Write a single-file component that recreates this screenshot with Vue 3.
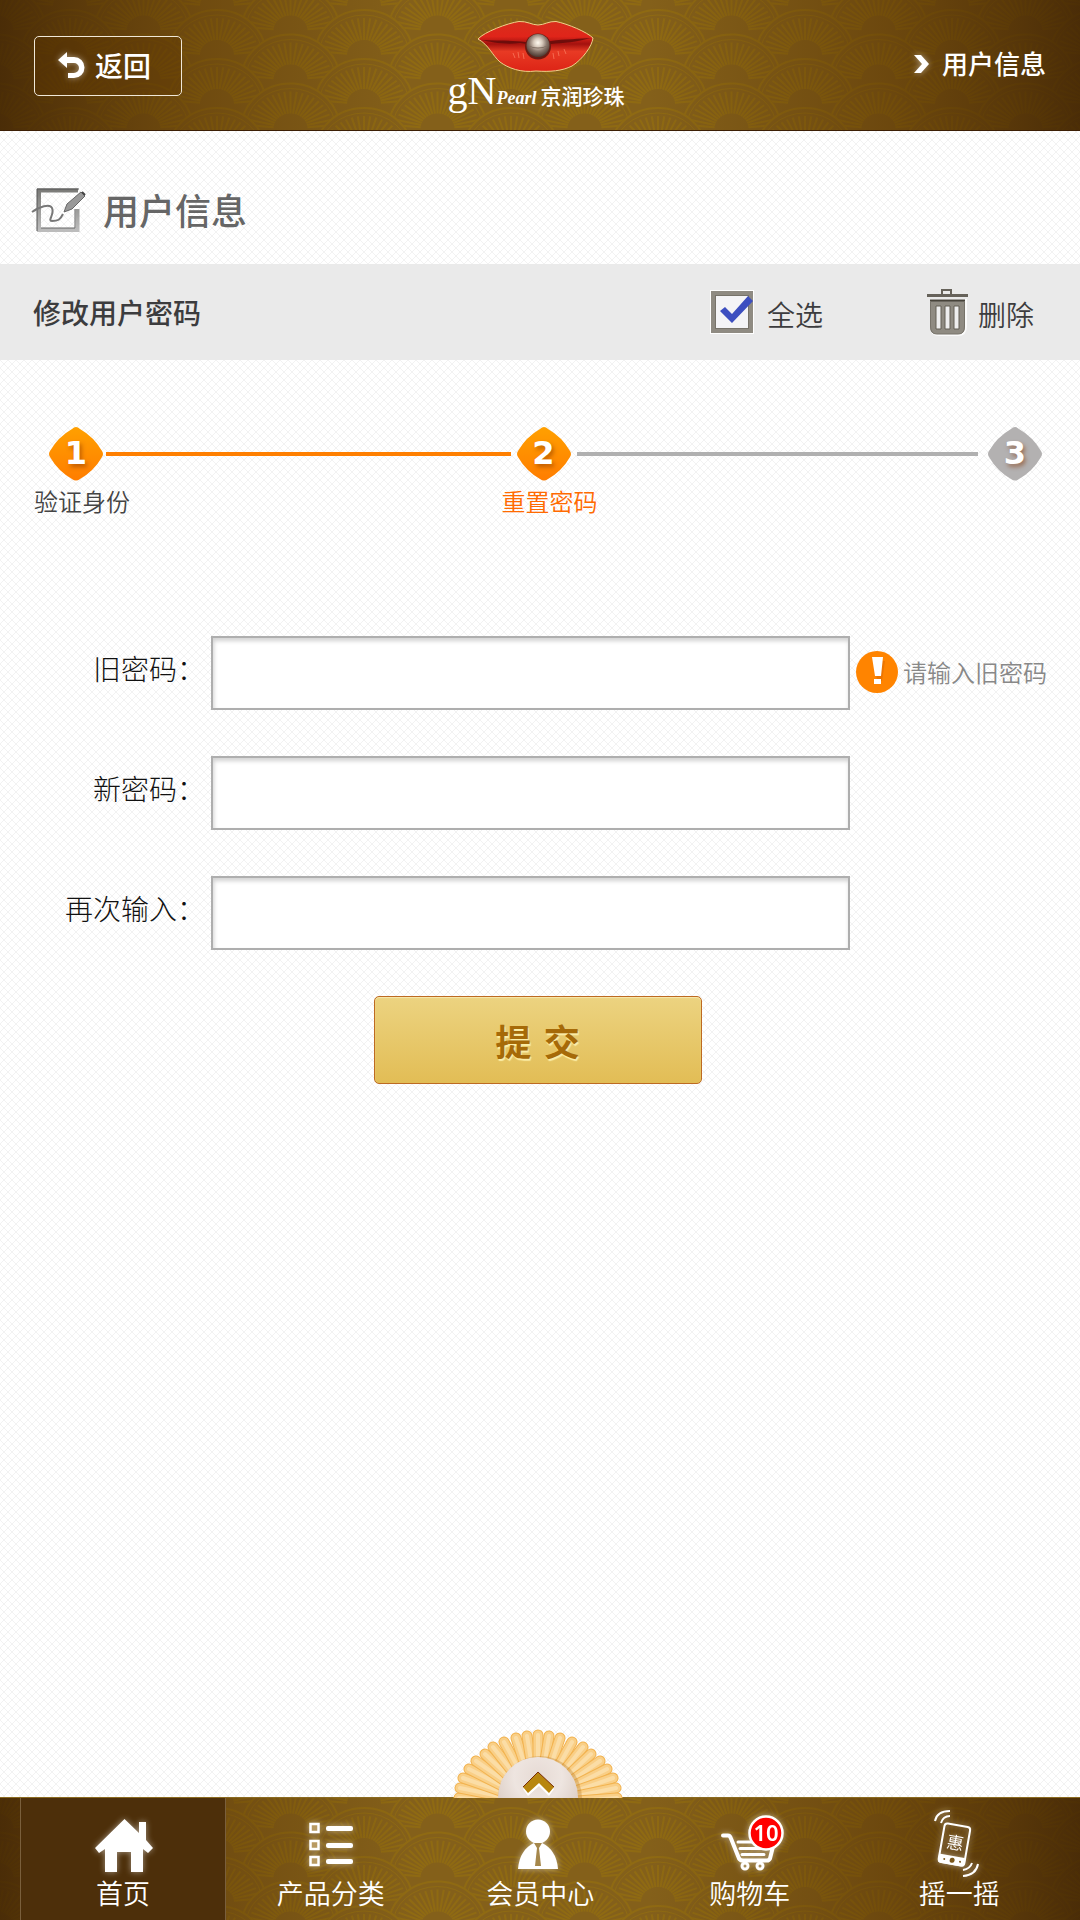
<script setup>
import { ref } from 'vue'

const allSelected = ref(true)
const fields = ref([
  { id: 'old', label: '旧密码', value: '', hint: '请输入旧密码' },
  { id: 'new', label: '新密码', value: '', hint: '' },
  { id: 'repeat', label: '再次输入', value: '', hint: '' },
])

// Fans of the wave pattern, back to front: [centre x, centre y]
const fans = []
for (let row = -1; row < 5; row++) {
  const y = row * 24.5 + 6
  const shift = row % 2 === 0 ? 70 : -3.5
  for (const x of [shift - 147, shift, shift + 147, shift + 294]) fans.push([x, y])
}
const rays = Array.from({ length: 21 }, (_, i) => {
  const a = ((i - 10) * 8.5 * Math.PI) / 180
  const s = Math.sin(a)
  const c = Math.cos(a)
  return `M${s * 17} ${-c * 15}L${s * 42} ${-c * 37}`
}).join('')

// Rib tips of the shell, right half, measured from the hinge
const half = [[11, -67], [22, -65], [34, -61], [45, -56], [53, -49], [62, -42], [69, -34], [75, -25], [78, -15], [79, -5]]
const ribs = [
  ...half.map(([x, y]) => [-x, y]).reverse(),
  [0, -68],
  ...half,
]
</script>

<template>
  <div class="page">
    <header class="top">
      <svg class="waves" aria-hidden="true">
        <defs>
          <g id="fan">
            <ellipse rx="50" ry="46" fill="#84601a" />
            <ellipse rx="49" ry="45" fill="none" stroke="#8f6a12" stroke-width="2" />
            <ellipse rx="45" ry="40" fill="none" stroke="#8f6a12" stroke-width="1" />
            <path :d="rays" stroke="#8f6a12" stroke-width="2" />
          </g>
          <pattern id="scales" width="147" height="49" patternUnits="userSpaceOnUse">
            <use v-for="(f, i) in fans" :key="i" href="#fan" :x="f[0]" :y="f[1]" />
          </pattern>
          <linearGradient id="shade">
            <stop offset="0" stop-color="#3a1e02" stop-opacity=".78" />
            <stop offset=".18" stop-color="#512c00" stop-opacity=".42" />
            <stop offset=".38" stop-color="#512c00" stop-opacity="0" />
            <stop offset=".6" stop-color="#512c00" stop-opacity="0" />
            <stop offset=".82" stop-color="#512c00" stop-opacity=".46" />
            <stop offset="1" stop-color="#3a1e02" stop-opacity=".78" />
          </linearGradient>
        </defs>
        <rect width="100%" height="100%" fill="url(#scales)" />
        <rect width="100%" height="100%" fill="url(#shade)" />
      </svg>

      <button class="back" type="button">
        <svg width="30" height="30" viewBox="57 50 30 30" aria-hidden="true">
          <path d="M58 59l9-8v5h7a9 9 0 0 1 0 21h-6v-5h6a5 5 0 0 0 0-10h-7v5z" fill="#fff" />
        </svg>
        <span>返回</span>
      </button>

      <div class="logo">
        <svg width="118" height="54" viewBox="477 20 118 54" aria-hidden="true">
          <defs>
            <linearGradient id="lip" x2="0" y2="1">
              <stop offset="0" stop-color="#d92d1c" />
              <stop offset=".3" stop-color="#e0251a" />
              <stop offset=".45" stop-color="#a3120e" />
              <stop offset=".6" stop-color="#e83a24" />
              <stop offset="1" stop-color="#dd2416" />
            </linearGradient>
            <radialGradient id="bead" cx=".5" cy=".38" r=".62">
              <stop offset="0" stop-color="#fffaf0" />
              <stop offset=".3" stop-color="#d8cabd" />
              <stop offset=".6" stop-color="#8d7b70" />
              <stop offset="1" stop-color="#4a352d" />
            </radialGradient>
          </defs>
          <path d="M478 39C484 32 508 23 519 21.500C527 21 532 25 538 25C544 25 549 21 556 21.500C568 24 587 32 593 38C592 46 583 59 572 66C562 71 550 72 536 71C521 73 508 68 500 62C492 55 489 45 478 39Z" fill="url(#lip)" stroke="#efd08a" stroke-width="1" />
          <path d="M481 40C500 41 514 40 525 42C535 43 544 43 551 41C565 39 580 39 591 38C577 42 563 43 551 44C540 46 531 45 520 43C505 45 491 42 481 40Z" fill="#5c0b0a" opacity=".8" />
          <path d="M513 53l2 5m3-6l1 6m4-5l1 6m29-6l1 6m4-8l1 5m5-7l2 5" stroke="#ff8d70" stroke-width="1" opacity=".6" />
          <circle cx="538" cy="46.500" r="13" fill="#6b1a12" />
          <circle cx="538" cy="45.500" r="11.500" fill="url(#bead)" />
          <path d="M529 46q9 3 18 0q-9 5-18 0z" fill="#5a463c" opacity=".7" />
        </svg>
        <div class="brand"><span class="gn">gN</span><em>Pearl</em><b>京润珍珠</b></div>
      </div>

      <a class="crumb" href="#">
        <svg width="18" height="22" viewBox="912 53 18 22" aria-hidden="true">
          <path d="M914 55h7l8 9-8 9h-7l8-9z" fill="#fff" />
        </svg>
        <span>用户信息</span>
      </a>
    </header>

    <main>
      <h1>
        <svg width="56" height="48" viewBox="31 187 56 48" aria-hidden="true">
          <defs>
            <linearGradient id="steel" x2="0" y2="1">
              <stop offset="0" stop-color="#7b7b78" />
              <stop offset="1" stop-color="#bcbcbc" />
            </linearGradient>
          </defs>
          <path d="M78 190.500H39V230H77.500V209" fill="none" stroke="url(#steel)" stroke-width="4" />
          <path d="M79 189H37V231" fill="none" stroke="#555" stroke-width="1" />
          <path d="M41 228H75V209" fill="none" stroke="#666" stroke-width="1" />
          <path d="M32 212c7-5 18-9 20-4c3 6-5 13 0 13c6 0 8-1 11-7" fill="none" stroke="#777" stroke-width="2" />
          <path d="M64 212l3-8 14-12 4 4-13 13z" fill="#999" stroke="#666" stroke-width="1" />
          <path d="M82 192l3 3" stroke="#444" stroke-width="2" />
        </svg>
        <span>用户信息</span>
      </h1>

      <section class="bar">
        <h2>修改用户密码</h2>
        <label class="all" for="all">
          <span class="tick">
            <input id="all" v-model="allSelected" type="checkbox" />
            <svg v-if="allSelected" width="42" height="42" viewBox="710 293 42 42" aria-hidden="true">
              <path d="M719 313l5-4 7 7 16-18 5 5-21 22z" fill="#3d4fc0" />
            </svg>
          </span>
          <span class="name">全选</span>
        </label>
        <button class="del" type="button">
          <svg width="42" height="48" viewBox="926 290 42 48" aria-hidden="true">
            <path d="M931 303h33v25q0 8-7 8h-19q-7 0-7-8z" fill="none" stroke="#fff" stroke-width="4" opacity=".8" />
            <path d="M941 296v-4h9v4" fill="none" stroke="#66625a" stroke-width="2" />
            <path d="M926 296h41v3h-41z" fill="#66625a" />
            <path d="M929 302h35v26q0 8-6 8h-23q-6 0-6-8z" fill="#8f8b82" />
            <path d="M929 302.500h35" stroke="#47433a" stroke-width="2" />
            <path d="M929.500 303v25q0 8 6 8h22q6 0 6-8v-25" fill="none" stroke="#77736a" stroke-width="1" />
            <path d="M935 308h5v23h-5zM944 308h5v23h-5zM953 308h5v23h-5z" fill="#eee" stroke="#625e55" stroke-width="1" />
          </svg>
          <span class="name">删除</span>
        </button>
      </section>

      <ol class="steps">
        <li>
          <div class="mark">
            <svg width="54" height="54" viewBox="0 0 54 54" aria-hidden="true">
              <defs>
                <linearGradient id="amber" x2="0" y2="1">
                  <stop offset="0" stop-color="#ffa000" />
                  <stop offset="1" stop-color="#ff7d00" />
                </linearGradient>
              </defs>
              <path d="M27 0Q29 0 31 2Q45 10 53 24Q55 27 53 30Q45 44 31 52Q27 55 23 52Q9 44 1 30Q-1 27 1 24Q9 10 23 2Q25 0 27 0Z" fill="url(#amber)" />
            </svg>
            <span>1</span>
          </div>
          <i class="line"></i>
          <p>验证身份</p>
        </li>
        <li class="now">
          <div class="mark">
            <svg width="54" height="54" viewBox="0 0 54 54" aria-hidden="true">
              <path d="M27 0Q29 0 31 2Q45 10 53 24Q55 27 53 30Q45 44 31 52Q27 55 23 52Q9 44 1 30Q-1 27 1 24Q9 10 23 2Q25 0 27 0Z" fill="url(#amber)" />
            </svg>
            <span>2</span>
          </div>
          <i class="line grey"></i>
          <p>重置密码</p>
        </li>
        <li class="last">
          <div class="mark">
            <svg width="54" height="54" viewBox="0 0 54 54" aria-hidden="true">
              <path d="M27 0Q29 0 31 2Q45 10 53 24Q55 27 53 30Q45 44 31 52Q27 55 23 52Q9 44 1 30Q-1 27 1 24Q9 10 23 2Q25 0 27 0Z" fill="#b3b1b1" />
            </svg>
            <span>3</span>
          </div>
        </li>
      </ol>

      <form @submit.prevent>
        <div v-for="f in fields" :key="f.id" class="row">
          <label :for="f.id">{{ f.label }}：</label>
          <input :id="f.id" v-model="f.value" type="password" />
          <div class="hint">
            <template v-if="f.hint">
              <svg width="42" height="42" viewBox="0 0 42 42" aria-hidden="true">
                <circle cx="21" cy="21" r="21" fill="#ff8400" />
                <path d="M19 10h10l-3 20h-5z" fill="#d96500" opacity=".5" />
                <path d="M16 6h11l-2 19h-6zM18 28h7v5h-7z" fill="#fff" />
              </svg>
              <span>{{ f.hint }}</span>
            </template>
          </div>
        </div>
        <button class="submit" type="submit"><span>提 交</span></button>
      </form>
    </main>

    <footer>
      <button class="shell" type="button" aria-label="展开">
        <svg width="170" height="70" viewBox="-85 -70 170 70" aria-hidden="true">
          <defs>
            <radialGradient id="pearl" cx=".5" cy=".25" r=".6">
              <stop offset="0" stop-color="#e6dad4" />
              <stop offset=".5" stop-color="#eee5e0" />
              <stop offset="1" stop-color="#dccdc4" />
            </radialGradient>
          </defs>
          <g stroke-linecap="round">
            <g v-for="(r, i) in ribs" :key="i">
              <path :d="`M0 6L${r[0]} ${r[1] + 5}`" stroke="#f2b350" stroke-width="11" />
              <path :d="`M0 6L${r[0]} ${r[1] + 5}`" stroke="#f9cf87" stroke-width="9" />
              <path :d="`M0 6L${r[0]} ${r[1] + 5}`" stroke="#fbdda6" stroke-width="4" />
            </g>
          </g>
          <circle cx="2" cy="0" r="42" fill="#b67a2c" opacity=".35" />
          <circle cx="0" cy="-1" r="40" fill="url(#pearl)" />
          <path d="M-15-9L0-24 16-9 11-2 1-12-10-2z" fill="#fff" />
          <path d="M-15-11L0-26 16-11 11-5 1-15-10-5z" fill="#b8860f" />
          <path d="M-15-11L0-26 16-11" fill="none" stroke="#7a2c08" stroke-width="1" />
        </svg>
      </button>

      <svg class="waves" aria-hidden="true">
        <rect width="100%" height="100%" fill="url(#scales)" />
        <rect width="100%" height="100%" fill="url(#shade)" />
      </svg>

      <nav>
        <a class="active" href="#">
          <svg width="72" height="68" viewBox="88 1808 72 68" aria-hidden="true">
            <path d="M125.500 1819L140 1833V1822H147V1840L154 1848 149 1853 144 1849V1872H132V1852H118V1872H106V1849L100 1853 96 1848Z" fill="#fff" />
          </svg>
          <span>首页</span>
        </a>
        <a href="#">
          <svg width="72" height="68" viewBox="296 1808 72 68" aria-hidden="true">
            <g v-for="y in [1824, 1841, 1857]" :key="y">
              <rect x="311.500" :y="y" width="8" height="8" fill="#b89a62" stroke="#fff" stroke-width="2.500" />
              <rect x="327" :y="y + 2" width="27" height="5" rx="2" fill="#fff" />
            </g>
          </svg>
          <span>产品分类</span>
        </a>
        <a href="#">
          <svg width="72" height="68" viewBox="505 1808 72 68" aria-hidden="true">
            <circle cx="539" cy="1831.500" r="12" fill="#fff" />
            <path d="M519 1869c1-13 7-22 16-26h8c9 4 15 13 16 26z" fill="#fff" />
            <path d="M535 1843h8l-3 5 2 18h-6l2-18z" fill="#a5874b" />
          </svg>
          <span>会员中心</span>
        </a>
        <a href="#">
          <svg width="72" height="68" viewBox="714 1808 72 68" aria-hidden="true">
            <g fill="none" stroke="#fff" stroke-width="3" stroke-linecap="round" stroke-linejoin="round">
              <path d="M723 1835.500h5q2 0 3 3l8 20q1 2 4 2h24q2 0 3-2l4-16" stroke-width="4" />
              <path d="M738 1842h20M740 1848.500h31M742 1854.500h22" />
              <circle cx="745" cy="1866" r="3" />
              <circle cx="760" cy="1866" r="3" />
            </g>
            <circle cx="766" cy="1833" r="16.500" fill="#f00" stroke="#fff" stroke-width="2.500" />
            <text x="766" y="1841" text-anchor="middle" class="count">10</text>
          </svg>
          <span>购物车</span>
        </a>
        <a href="#">
          <svg width="72" height="68" viewBox="923 1808 72 68" aria-hidden="true">
            <g transform="rotate(10 954.500 1844)">
              <rect x="941.500" y="1825" width="26" height="39" rx="3" fill="none" stroke="#fff" stroke-width="2" />
              <path d="M941 1856h27v6q0 3-3 3h-21q-3 0-3-3z" fill="#fff" />
              <circle cx="955" cy="1860.500" r="2.500" fill="#7b571b" />
              <circle cx="947" cy="1860.500" r="1" fill="#7b571b" />
              <circle cx="963" cy="1860.500" r="1" fill="#7b571b" />
              <text x="955" y="1849" text-anchor="middle" class="promo">惠</text>
            </g>
            <g fill="none" stroke="#fff" stroke-width="2">
              <path d="M935 1821q2-10 15-10M941 1823q2-7 9-7M963 1876q13-1 15-12M963 1870q7-1 9-7" />
            </g>
          </svg>
          <span>摇一摇</span>
        </a>
      </nav>
    </footer>
  </div>
</template>

<style>
body {
  margin: 0;
}
</style>

<style scoped>
.page {
  display: flex;
  flex-direction: column;
  min-height: 100vh;
  font-family: "Noto Sans CJK SC", "Noto Sans", sans-serif;
  background:
    linear-gradient(45deg, transparent 46%, rgba(0, 0, 0, .05) 46% 54%, transparent 54%) 0 0 / 8px 8px,
    linear-gradient(-45deg, transparent 46%, rgba(0, 0, 0, .05) 46% 54%, transparent 54%) 0 0 / 8px 8px,
    #fff;
}
h1, h2, p, ol {
  margin: 0;
  padding: 0;
  list-style: none;
}
svg {
  display: block;
  flex: none;
}
button {
  font-family: inherit;
  cursor: pointer;
}
a {
  color: #fff;
  text-decoration: none;
}
.waves {
  position: absolute;
  inset: 0;
  width: 100%;
  height: 100%;
}

.top {
  position: relative;
  display: grid;
  grid-template-columns: 1fr auto 1fr;
  align-items: center;
  box-sizing: border-box;
  height: 131px;
  padding: 2px 34px 0;
  border-bottom: 1px solid #3d1f05;
}
.back {
  position: relative;
  display: flex;
  align-items: center;
  gap: 8px;
  width: 148px;
  height: 60px;
  padding: 0 0 0 22px;
  border: 1px solid #f0e8d8;
  border-radius: 5px;
  background: rgba(90, 50, 0, .3);
  color: #fff;
  font-size: 28px;
  font-weight: 500;
  line-height: 40px;
}
.back span {
  padding-bottom: 2px;
}
.back svg, .crumb svg, nav svg {
  filter: drop-shadow(0 0 3px rgba(255, 255, 255, .5));
}
.logo {
  position: relative;
  display: flex;
  flex-direction: column;
  align-items: center;
  padding-right: 8px;
}
.brand {
  display: flex;
  align-items: baseline;
  height: 38px;
  line-height: 34px;
  color: #fff;
}
.gn {
  font-family: "Liberation Serif", serif;
  font-size: 40px;
}
.brand em {
  margin-right: 4px;
  font: italic bold 18px "Liberation Serif", serif;
}
.brand b {
  font-size: 21px;
  font-weight: 500;
}
.crumb {
  position: relative;
  display: flex;
  justify-content: flex-end;
  align-items: center;
  gap: 12px;
  padding-bottom: 4px;
  font-size: 26px;
  font-weight: 500;
}
.crumb span {
  padding-bottom: 4px;
}

h1 {
  display: flex;
  align-items: center;
  gap: 16px;
  height: 133px;
  padding: 26px 31px 0;
  box-sizing: border-box;
  color: #666;
  font-size: 36px;
  font-weight: 500;
}
h1 span {
  padding-bottom: 4px;
}
.bar {
  display: flex;
  align-items: center;
  height: 96px;
  padding: 0 46px 0 33px;
  background: #eaeaea;
  color: #3c3c3e;
}
.bar h2 {
  flex: 1;
  font-size: 28px;
  font-weight: 500;
}
.all, .del {
  display: flex;
  align-items: center;
  font-size: 28px;
  font-weight: 350;
}
.all {
  gap: 14px;
  margin-right: 104px;
}
.bar .name {
  padding-top: 4px;
}
.tick {
  position: relative;
}
.tick input {
  display: block;
  width: 42px;
  height: 42px;
  margin: 0;
  appearance: none;
  border: 4px solid #8f8b82;
  outline: 1px solid #fff;
  background: #f4f4f6;
  box-shadow: inset 0 0 0 1px #77736a;
}
.tick svg {
  position: absolute;
  inset: 0;
  pointer-events: none;
}
.del {
  gap: 9px;
  padding: 0;
  border: 0;
  background: none;
  color: inherit;
}

.steps {
  display: flex;
  padding: 67px 38px 0 49px;
}
.steps li {
  display: grid;
  flex: 1;
  grid-template-columns: 54px 1fr;
  align-items: center;
  column-gap: 3px;
}
.steps .now {
  flex: 1 0 4px;
}
.steps .last {
  flex: none;
  grid-template-columns: 54px;
  align-content: start;
}
.mark {
  position: relative;
}
.mark span {
  position: absolute;
  inset: 0;
  color: #fff;
  font: bold 32px/52px "DejaVu Sans", sans-serif;
  text-align: center;
  text-shadow: 2px 3px 4px rgba(130, 50, 0, .5);
}
.line {
  height: 4px;
  margin-right: 6px;
  background: #ff7f00;
}
.line.grey {
  margin: 0 10px 0 3px;
  background: #b0b0b0;
}
.steps p {
  grid-column: 1 / 3;
  margin-left: -15px;
  color: #444;
  font-size: 24px;
  font-weight: 350;
  line-height: 40px;
}
.steps .now p {
  color: #ff6a00;
}

form {
  display: flex;
  flex-direction: column;
  gap: 46px;
  padding: 115px 34px 0;
}
.row {
  display: flex;
  align-items: center;
}
.row label {
  width: 171px;
  padding-bottom: 10px;
  color: #111;
  font-size: 28px;
  font-weight: 300;
  text-align: right;
}
.row input {
  flex: 1;
  min-width: 0;
  height: 74px;
  box-sizing: border-box;
  margin: 0 6px;
  padding: 0 14px;
  border: 2px solid #aeaeae;
  background: #fff;
  box-shadow: inset 1px 3px 4px rgba(0, 0, 0, .18);
  font-size: 28px;
}
.hint {
  display: flex;
  align-items: center;
  gap: 5px;
  width: 190px;
  padding-bottom: 3px;
  color: #888;
  font-size: 24px;
  font-weight: 350;
  white-space: nowrap;
}
.submit {
  align-self: center;
  width: 328px;
  height: 88px;
  margin-right: 5px;
  padding: 0;
  border: 1px solid #bd6a22;
  border-radius: 5px;
  background: linear-gradient(#ecd380, #e2bd55);
  box-shadow: inset 0 1px 1px #f8e8ac;
  color: #a66a08;
  font-family: "DejaVu Sans", "Noto Sans CJK SC", sans-serif;
  font-size: 36px;
  font-weight: bold;
  text-shadow: 1px 2px 1px #fbeea8;
}

footer {
  position: relative;
  margin-top: auto;
  border-top: 1px solid #8a6a20;
}
.shell {
  position: absolute;
  bottom: 100%;
  left: 50%;
  margin-left: -87px;
  padding: 0;
  border: 0;
  background: none;
}
nav {
  position: relative;
  display: flex;
  height: 122px;
  padding: 0 16px 0 20px;
}
nav a {
  display: flex;
  flex: 1;
  flex-direction: column;
  align-items: center;
  box-sizing: border-box;
  padding-top: 10px;
  font-size: 27px;
  font-weight: 350;
  line-height: 34px;
}
nav svg {
  overflow: visible;
}
nav .active {
  flex: 0 0 206px;
  border: solid #7a5f3c;
  border-width: 0 1px;
  background: #4d2f0a;
}
.count {
  fill: #fff;
  font: 600 22px "Noto Sans", sans-serif;
}
.promo {
  fill: #fff;
  font-size: 17px;
}
</style>
